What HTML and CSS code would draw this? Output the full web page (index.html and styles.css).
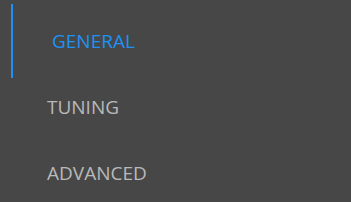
FILE: index.html
```html
<!DOCTYPE html>
<html lang="en">
<head>
  <meta charset="UTF-8">
  <meta name="viewport" content="width=device-width, initial-scale=1.0">
  <title>Settings</title>
  <link rel="stylesheet" href="styles.css">
</head>

<body>
  <nav class="side-nav">
    <a class="nav-item active" href="#general">GENERAL</a>
    <a class="nav-item" href="#tuning">TUNING</a>
    <a class="nav-item" href="#advanced">ADVANCED</a>
  </nav>
</body>

</html>
```

FILE: styles.css
```css
:root {
  --background: #474747;
  --primary: #1e92f4;
  --text-secondary: #b9b9b9;
}

* {
  margin: 0;
  padding: 0;
  box-sizing: border-box;
}

body {
  width: 351px;
  height: 202px;
  overflow: hidden;
  background: var(--background);
  font-family: "Open Sans", "Noto Sans", sans-serif;
  -webkit-font-smoothing: antialiased;
}

.side-nav {
  display: flex;
  flex-direction: column;
  padding-top: 8px;
}

.nav-item {
  position: relative;
  display: block;
  height: 66px;
  line-height: 66px;
  padding-left: 47px;
  font-size: 19px;
  color: var(--text-secondary);
  text-decoration: none;
}

.nav-item.active {
  padding-left: 52px;
  color: var(--primary);
}

.nav-item.active::before {
  content: "";
  position: absolute;
  left: 11px;
  top: -4px;
  bottom: -4px;
  width: 2px;
  background: var(--primary);
}
```
